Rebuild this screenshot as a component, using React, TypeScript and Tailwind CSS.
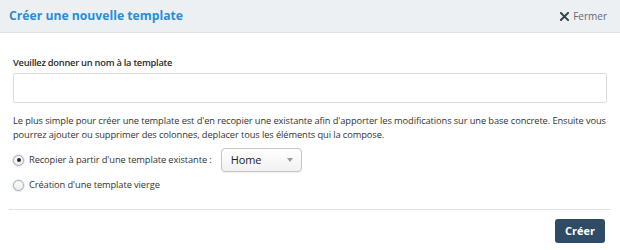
import { useState } from "react";

export default function App() {
  const [mode, setMode] = useState("copy");
  const [name, setName] = useState("");

  return (
    <div
      className="w-[620px] h-[250px] bg-white text-[#333] overflow-hidden"
      style={{ fontFamily: '"Open Sans", "Liberation Sans", sans-serif' }}
    >
      {/* Header */}
      <div className="h-[33px] flex items-center justify-between pl-[9px] pr-[13px] bg-[#edf0f3] border-b border-[#dde2e7]">
        <h1 className="text-[12.2px] font-bold text-[#2a8dd4]">
          Créer une nouvelle template
        </h1>
        <button className="flex items-center gap-[4px] text-[10px] text-[#5d6b78]">
          <svg width="9" height="9" viewBox="0 0 10 10">
            <path d="M1 1 L9 9 M9 1 L1 9" stroke="#34434f" strokeWidth="2.2" strokeLinecap="square" />
          </svg>
          Fermer
        </button>
      </div>

      {/* Body */}
      <div className="px-[13px] pt-[23px]">
        <label className="block text-[9.3px] font-semibold tracking-[-0.25px] text-[#2b2b2b] leading-[14px]">
          Veuillez donner un nom à la template
        </label>
        <input
          type="text"
          value={name}
          onChange={(e) => setName(e.target.value)}
          className="mt-[3px] block w-full h-[30px] border border-[#dcdcdc] rounded-[2px] px-2 text-[12px] outline-none"
        />
        <p className="mt-[11px] text-[9.3px] leading-[14px] tracking-[-0.1px] text-[#333]">
          Le plus simple pour créer une template est d'en recopier une existante afin d'apporter les modifications sur une base concrete. Ensuite vous pourrez ajouter ou supprimer des colonnes, deplacer tous les éléments qui la compose.
        </p>

        <div className="mt-[6px] flex items-center text-[9.3px] tracking-[-0.1px]">
          <Radio checked={mode === "copy"} onClick={() => setMode("copy")} />
          <span className="ml-[5px]" onClick={() => setMode("copy")}>
            Recopier à partir d'une template existante :
          </span>
          <div className="ml-[9px] w-[81px] h-[24px] flex items-center justify-between pl-[9px] pr-[8px] rounded-[4px] border border-[#c5c5c5] bg-gradient-to-b from-white to-[#f1f1f1] shadow-[0_1px_1px_rgba(0,0,0,0.06)]">
            <span className="text-[11px] font-medium text-[#222]">Home</span>
            <svg width="6" height="4" viewBox="0 0 6 4">
              <path d="M0 0 L6 0 L3 4 Z" fill="#999" />
            </svg>
          </div>
        </div>

        <div className="mt-[6px] flex items-center text-[9.3px] tracking-[-0.1px] h-[14px]">
          <Radio checked={mode === "blank"} onClick={() => setMode("blank")} />
          <span className="ml-[5px]" onClick={() => setMode("blank")}>
            Création d'une template vierge
          </span>
        </div>
      </div>

      <div className="mx-[9px] mt-[17px] border-t border-[#e1e1e1]" />

      <div className="flex justify-end pr-[15px] pt-[9px]">
        <button className="w-[50px] h-[24px] rounded-[3px] bg-[#2f4b66] text-white text-[11px] font-bold">
          Créer
        </button>
      </div>
    </div>
  );
}

function Radio({ checked, onClick }: { checked: boolean; onClick: () => void }) {
  return (
    <span
      onClick={onClick}
      className="w-[11px] h-[11px] rounded-full border border-[#a9a9a9] bg-gradient-to-b from-white to-[#ececec] flex items-center justify-center shadow-[0_0_0_1px_rgba(120,170,230,0.25)]"
    >
      {checked && <span className="w-[4px] h-[4px] rounded-full bg-[#2a2a2a]" />}
    </span>
  );
}
